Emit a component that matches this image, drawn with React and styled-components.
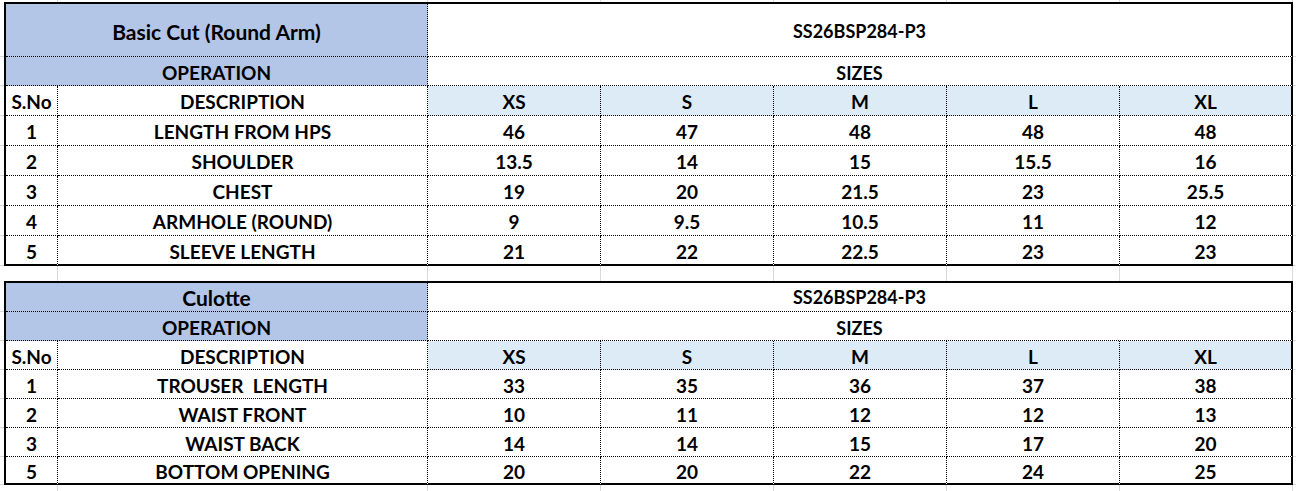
import React from 'react';
import styled, { createGlobalStyle } from 'styled-components';

const GRID = '#d9d9d9';
const TITLE_BLUE = '#b4c6e7';
const HEAD_BLUE = '#ddebf7';
const COLS = '52px 370px repeat(5, 173px)';
const SIZES = ['XS', 'S', 'M', 'L', 'XL'];

const Global = createGlobalStyle`
  html, body { margin: 0; padding: 0; background: #fff; }
  body { font-family: Lato, "Open Sans", sans-serif; color: #000; }
  * { box-sizing: border-box; }
`;

const Sheet = styled.div`
  width: 1296px;
  height: 491px;
  overflow: hidden;
  display: flex;
  flex-direction: column;
  background: #fff;
`;

const GapRow = styled.div`
  display: grid;
  grid-template-columns: 6px ${COLS} 1fr;
  height: ${(p) => p.$h}px;
  flex: none;
`;

const GapCell = styled.div`
  border-right: ${(p) => (p.$none ? '0' : `1px solid ${GRID}`)};
`;

const Band = styled.div`
  display: flex;
  flex: none;
`;

const Margin = styled.div`
  display: flex;
  flex-direction: column;
  width: ${(p) => (p.$w ? `${p.$w}px` : 'auto')};
  flex: ${(p) => (p.$w ? 'none' : '1')};
`;

const MarginCell = styled.div`
  height: ${(p) => p.$h}px;
  border-bottom: 1px solid ${GRID};
`;

const Table = styled.div`
  display: grid;
  grid-template-columns: ${COLS};
  grid-template-rows: ${(p) => p.$rows};
  border-top: 2px solid #000;
  border-left: 2px solid #000;
  flex: none;
`;

const Cell = styled.div`
  display: flex;
  align-items: ${(p) => (p.$bottom ? 'flex-end' : 'center')};
  justify-content: center;
  padding-top: ${(p) => (p.$bottom ? '0' : p.$pt ?? 2)}px;
  padding-bottom: ${(p) => (p.$bottom ? '3px' : '0')};
  grid-column: span ${(p) => p.$span || 1};
  background: ${(p) => p.$bg || '#fff'};
  border-right: ${(p) => (p.$edgeR ? '2px solid #000' : '1px dotted #000')};
  border-bottom: ${(p) => (p.$edgeB ? '2px solid #000' : '1px dotted #000')};
  font-weight: 700;
  font-size: ${(p) => p.$size || 19}px;
  line-height: 1;
  white-space: pre;
`;

function SpecTable({ title, code, rows, rowHeights, marginHeights, headPad }) {
  const last = rows.length - 1;
  return (
    <Band>
      <Margin $w={4}>
        {marginHeights.map((h, i) => (
          <MarginCell key={i} $h={h} />
        ))}
      </Margin>
      <Table $rows={rowHeights.map((h) => `${h}px`).join(' ')}>
        <Cell $span={2} $bg={TITLE_BLUE} $size={21} $pt={headPad}>{title}</Cell>
        <Cell $span={5} $edgeR $size={18} $pt={headPad}>{code}</Cell>
        <Cell $span={2} $bg={TITLE_BLUE}>OPERATION</Cell>
        <Cell $span={5} $edgeR $size={18} $bottom>SIZES</Cell>
        <Cell>S.No</Cell>
        <Cell>DESCRIPTION</Cell>
        {SIZES.map((s, i) => (
          <Cell key={s} $bg={HEAD_BLUE} $edgeR={i === 4}>{s}</Cell>
        ))}
        {rows.map((r, ri) => (
          <React.Fragment key={ri}>
            <Cell $edgeB={ri === last}>{r[0]}</Cell>
            <Cell $edgeB={ri === last}>{r[1]}</Cell>
            {r.slice(2).map((v, vi) => (
              <Cell key={vi} $edgeB={ri === last} $edgeR={vi === 4}>{v}</Cell>
            ))}
          </React.Fragment>
        ))}
      </Table>
      <Margin>
        {marginHeights.map((h, i) => (
          <MarginCell key={i} $h={h} />
        ))}
      </Margin>
    </Band>
  );
}

function Gap({ h }) {
  return (
    <GapRow $h={h}>
      <GapCell $none />
      <GapCell />
      <GapCell />
      {SIZES.map((s) => (
        <GapCell key={s} />
      ))}
      <GapCell $none />
    </GapRow>
  );
}

const TOP_ROWS = [
  ['1', 'LENGTH FROM HPS', '46', '47', '48', '48', '48'],
  ['2', 'SHOULDER', '13.5', '14', '15', '15.5', '16'],
  ['3', 'CHEST', '19', '20', '21.5', '23', '25.5'],
  ['4', 'ARMHOLE (ROUND)', '9', '9.5', '10.5', '11', '12'],
  ['5', 'SLEEVE LENGTH', '21', '22', '22.5', '23', '23'],
];

const BOTTOM_ROWS = [
  ['1', 'TROUSER  LENGTH', '33', '35', '36', '37', '38'],
  ['2', 'WAIST FRONT', '10', '11', '12', '12', '13'],
  ['3', 'WAIST BACK', '14', '14', '15', '17', '20'],
  ['5', 'BOTTOM OPENING', '20', '20', '22', '24', '25'],
];

export default function App() {
  return (
    <>
      <Global />
      <Sheet>
        <Gap h={2} />
        <SpecTable
          title="Basic Cut (Round Arm)"
          code="SS26BSP284-P3"
          rows={TOP_ROWS}
          headPad={2}
          rowHeights={[53, 29, 30, 30, 30, 30, 30, 30]}
          marginHeights={[55, 29, 30, 30, 30, 30, 30, 30]}
        />
        <Gap h={15} />
        <SpecTable
          title="Culotte"
          code="SS26BSP284-P3"
          rows={BOTTOM_ROWS}
          headPad={0}
          rowHeights={[29, 29, 29, 29, 29, 29, 28]}
          marginHeights={[31, 29, 29, 29, 29, 29, 28]}
        />
        <Gap h={6} />
      </Sheet>
    </>
  );
}
